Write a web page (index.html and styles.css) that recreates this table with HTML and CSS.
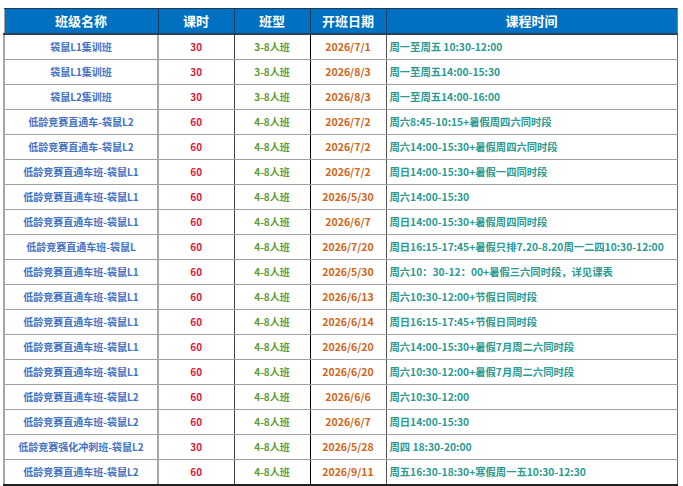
FILE: index.html
```html
<!DOCTYPE html>
<html lang="zh-CN">
<head>
<meta charset="utf-8">
<title>课程表</title>
<link rel="stylesheet" href="styles.css">
</head>
<body>
<table class="sched">
  <colgroup>
    <col class="c-name"><col class="c-hours"><col class="c-type"><col class="c-date"><col class="c-time">
  </colgroup>
  <thead>
    <tr><th>班级名称</th><th>课时</th><th>班型</th><th>开班日期</th><th>课程时间</th></tr>
  </thead>
  <tbody>
    <tr><td class="name">袋鼠L1集训班</td><td class="hrs">30</td><td class="type">3-8人班</td><td class="date">2026/7/1</td><td class="time">周一至周五 10:30-12:00</td></tr>
    <tr><td class="name">袋鼠L1集训班</td><td class="hrs">30</td><td class="type">3-8人班</td><td class="date">2026/8/3</td><td class="time">周一至周五14:00-15:30</td></tr>
    <tr><td class="name">袋鼠L2集训班</td><td class="hrs">30</td><td class="type">3-8人班</td><td class="date">2026/8/3</td><td class="time">周一至周五14:00-16:00</td></tr>
    <tr><td class="name">低龄竞赛直通车-袋鼠L2</td><td class="hrs">60</td><td class="type">4-8人班</td><td class="date">2026/7/2</td><td class="time">周六8:45-10:15+暑假周四六同时段</td></tr>
    <tr><td class="name">低龄竞赛直通车-袋鼠L2</td><td class="hrs">60</td><td class="type">4-8人班</td><td class="date">2026/7/2</td><td class="time">周六14:00-15:30+暑假周四六同时段</td></tr>
    <tr><td class="name">低龄竞赛直通车班-袋鼠L1</td><td class="hrs">60</td><td class="type">4-8人班</td><td class="date">2026/7/2</td><td class="time">周日14:00-15:30+暑假一四同时段</td></tr>
    <tr><td class="name">低龄竞赛直通车班-袋鼠L1</td><td class="hrs">60</td><td class="type">4-8人班</td><td class="date">2026/5/30</td><td class="time">周六14:00-15:30</td></tr>
    <tr><td class="name">低龄竞赛直通车班-袋鼠L1</td><td class="hrs">60</td><td class="type">4-8人班</td><td class="date">2026/6/7</td><td class="time">周日14:00-15:30+暑假周四同时段</td></tr>
    <tr><td class="name">低龄竞赛直通车班-袋鼠L</td><td class="hrs">60</td><td class="type">4-8人班</td><td class="date">2026/7/20</td><td class="time">周日16:15-17:45+暑假只排7.20-8.20周一二四10:30-12:00</td></tr>
    <tr><td class="name">低龄竞赛直通车班-袋鼠L1</td><td class="hrs">60</td><td class="type">4-8人班</td><td class="date">2026/5/30</td><td class="time">周六10：30-12：00+暑假三六同时段，详见课表</td></tr>
    <tr><td class="name">低龄竞赛直通车班-袋鼠L1</td><td class="hrs">60</td><td class="type">4-8人班</td><td class="date">2026/6/13</td><td class="time">周六10:30-12:00+节假日同时段</td></tr>
    <tr><td class="name">低龄竞赛直通车班-袋鼠L1</td><td class="hrs">60</td><td class="type">4-8人班</td><td class="date">2026/6/14</td><td class="time">周日16:15-17:45+节假日同时段</td></tr>
    <tr><td class="name">低龄竞赛直通车班-袋鼠L1</td><td class="hrs">60</td><td class="type">4-8人班</td><td class="date">2026/6/20</td><td class="time">周六14:00-15:30+暑假7月周二六同时段</td></tr>
    <tr><td class="name">低龄竞赛直通车班-袋鼠L1</td><td class="hrs">60</td><td class="type">4-8人班</td><td class="date">2026/6/20</td><td class="time">周六10:30-12:00+暑假7月周二六同时段</td></tr>
    <tr><td class="name">低龄竞赛直通车班-袋鼠L2</td><td class="hrs">60</td><td class="type">4-8人班</td><td class="date">2026/6/6</td><td class="time">周六10:30-12:00</td></tr>
    <tr><td class="name">低龄竞赛直通车班-袋鼠L2</td><td class="hrs">60</td><td class="type">4-8人班</td><td class="date">2026/6/7</td><td class="time">周日14:00-15:30</td></tr>
    <tr><td class="name">低龄竞赛强化冲刺班-袋鼠L2</td><td class="hrs">30</td><td class="type">4-8人班</td><td class="date">2026/5/28</td><td class="time">周四 18:30-20:00</td></tr>
    <tr><td class="name">低龄竞赛直通车班-袋鼠L2</td><td class="hrs">60</td><td class="type">4-8人班</td><td class="date">2026/9/11</td><td class="time">周五16:30-18:30+寒假周一五10:30-12:30</td></tr>
  </tbody>
</table>
</body>
</html>
```
FILE: styles.css
```css
html, body {
  margin: 0;
  padding: 0;
  background: #ffffff;
}
body {
  padding: 8px 0 0 3px;
  font-family: "Noto Sans CJK SC", "Noto Sans", sans-serif;
  font-weight: bold;
}
.sched {
  border-collapse: collapse;
  table-layout: fixed;
  width: 673px;
}
.c-name { width: 154px; }
.c-hours { width: 76px; }
.c-type { width: 76px; }
.c-date { width: 76px; }
.c-time { width: 291px; }

.sched th {
  height: 24px;
  padding: 0;
  background: #0070c0;
  color: #ffffff;
  font-size: 13px;
  line-height: 16px;
  text-align: center;
  border: 1px solid #1f3a5a;
  border-bottom: 2px solid #2a3f55;
}
.sched th:first-child { border-left: 1px solid #a0a0a0; }
.sched th:last-child { border-right: 1px solid #808080; }
.sched thead tr { border-top: 1px solid #a0a0a0; }

.sched td {
  height: 24px;
  padding: 0;
  font-size: 10px;
  line-height: 14px;
  text-align: center;
  border-top: 1px solid #a0a0a0;
  border-bottom: 1px solid #a0a0a0;
  white-space: nowrap;
  overflow: hidden;
}
.sched tbody tr:last-child td { border-bottom: 2px solid #202020; }

.name {
  color: #4472c4;
  border-left: 2px solid #a6a6a6;
  border-right: 2px solid #a6a6a6;
}
.hrs {
  color: #e2163a;
  font-size: 10.5px;
  border-right: 1px solid #404040;
}
.type {
  color: #5f9b2f;
  border-right: 1px solid #000000;
}
.sched td.date {
  color: #d06418;
  font-size: 10.5px;
  border-right: 1px solid #555555;
}
.sched td.time {
  color: #2a9a92;
  font-size: 10.3px;
  text-align: left;
  padding-left: 3px;
  border-right: 1px solid #6a6a6a;
}
```
